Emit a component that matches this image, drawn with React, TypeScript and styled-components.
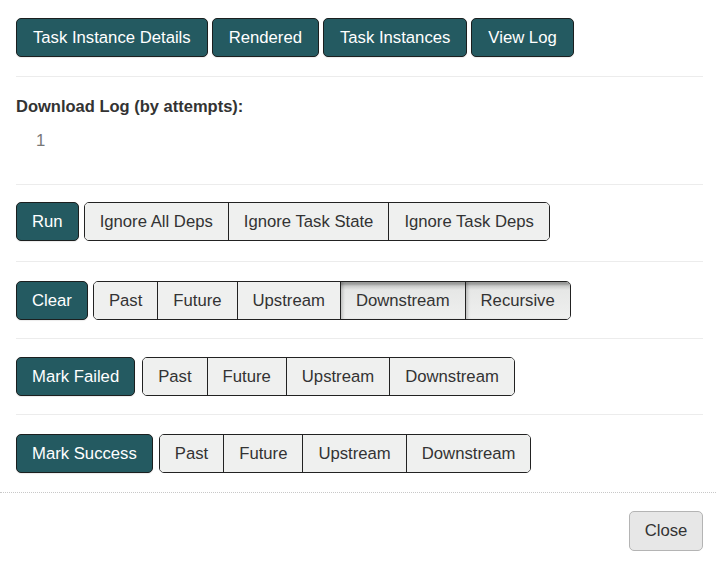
import React from "react";
import styled, { createGlobalStyle, css } from "styled-components";

const Global = createGlobalStyle`
  html, body { margin: 0; padding: 0; background: #fff; }
  body { font-family: "Liberation Sans", Arial, Helvetica, sans-serif; font-size: 16.7px; color: #333; }
`;

const Modal = styled.div`
  width: 716px;
  background: #fff;
`;

const Body = styled.div`
  padding: 0 13px 0 16px;
`;

const Section = styled.div<{ $top: number; $bottom: number; $last?: boolean }>`
  padding-top: ${(p) => p.$top}px;
  padding-bottom: ${(p) => p.$bottom}px;
  border-bottom: ${(p) => (p.$last ? "none" : "1px solid #ececec")};
`;

const Row = styled.div<{ $gap: number }>`
  display: flex;
  align-items: center;
  gap: ${(p) => p.$gap}px;
`;

const PrimaryButton = styled.button<{ $px?: number }>`
  box-sizing: border-box;
  height: 39px;
  padding: 0 ${(p) => p.$px ?? 15}px;
  font-family: inherit;
  font-size: 16.7px;
  line-height: 20px;
  color: #fff;
  background: #245a61;
  border: 1px solid #1b1f1f;
  border-radius: 5px;
  box-shadow: 0 1px 1px rgba(0, 0, 0, 0.08);
  cursor: pointer;
  white-space: nowrap;
`;

const Group = styled.div`
  display: flex;
  border: 1px solid #222;
  border-radius: 5px;
  overflow: hidden;
  height: 39px;
  box-sizing: border-box;
`;

const GroupButton = styled.button<{ $active?: boolean }>`
  box-sizing: border-box;
  padding: 0 15px;
  height: 100%;
  font-family: inherit;
  font-size: 16.7px;
  line-height: 20px;
  color: #333;
  background: #eff0ef;
  border: none;
  border-left: 1px solid #222;
  white-space: nowrap;
  cursor: pointer;
  &:first-child { border-left: none; }
  ${(p) =>
    p.$active &&
    css`
      background: linear-gradient(#9c9d9c 0, #9c9d9c 2px, #c9cac9 4px, #e6e7e6 8px, #eff0ef 100%);
      box-shadow: inset 3px 0 3px -1px rgba(0, 0, 0, 0.18);
    `}
`;

const Heading = styled.div`
  font-weight: bold;
  font-size: 16.5px;
  line-height: 22px;
  color: #333;
`;

const AttemptList = styled.div`
  margin-top: 13px;
  padding-left: 20px;
  line-height: 22px;
  color: #777;
`;

const Footer = styled.div`
  border-top: 1px dotted #c8c8c8;
  padding: 18px 13px 0 0;
  display: flex;
  justify-content: flex-end;
`;

const CloseButton = styled.button`
  box-sizing: border-box;
  height: 40px;
  width: 74px;
  font-family: inherit;
  font-size: 16.7px;
  color: #333;
  background: #e7e7e7;
  border: 1px solid #b4b4b4;
  border-radius: 5px;
  cursor: pointer;
`;

type Opt = { label: string; active?: boolean };

const ActionRow = ({ label, options, gap }: { label: string; options: Opt[]; gap: number }) => (
  <Row $gap={gap}>
    <PrimaryButton>{label}</PrimaryButton>
    <Group>
      {options.map((o) => (
        <GroupButton key={o.label} $active={o.active}>
          {o.label}
        </GroupButton>
      ))}
    </Group>
  </Row>
);

export default function App() {
  return (
    <Modal>
      <Global />
      <Body>
        <Section $top={18} $bottom={19}>
          <Row $gap={4}>
            <PrimaryButton $px={16}>Task Instance Details</PrimaryButton>
            <PrimaryButton $px={16}>Rendered</PrimaryButton>
            <PrimaryButton $px={16}>Task Instances</PrimaryButton>
            <PrimaryButton $px={16}>View Log</PrimaryButton>
          </Row>
        </Section>
        <Section $top={18} $bottom={32}>
          <Heading>Download Log (by attempts):</Heading>
          <AttemptList>1</AttemptList>
        </Section>
        <Section $top={17} $bottom={20}>
          <ActionRow
            label="Run"
            gap={5}
            options={[{ label: "Ignore All Deps" }, { label: "Ignore Task State" }, { label: "Ignore Task Deps" }]}
          />
        </Section>
        <Section $top={19} $bottom={18}>
          <ActionRow
            label="Clear"
            gap={5}
            options={[
              { label: "Past" },
              { label: "Future" },
              { label: "Upstream" },
              { label: "Downstream", active: true },
              { label: "Recursive", active: true },
            ]}
          />
        </Section>
        <Section $top={18} $bottom={18}>
          <ActionRow
            label="Mark Failed"
            gap={7}
            options={[{ label: "Past" }, { label: "Future" }, { label: "Upstream" }, { label: "Downstream" }]}
          />
        </Section>
        <Section $top={19} $bottom={19} $last>
          <ActionRow
            label="Mark Success"
            gap={6}
            options={[{ label: "Past" }, { label: "Future" }, { label: "Upstream" }, { label: "Downstream" }]}
          />
        </Section>
      </Body>
      <Footer>
        <CloseButton>Close</CloseButton>
      </Footer>
    </Modal>
  );
}
